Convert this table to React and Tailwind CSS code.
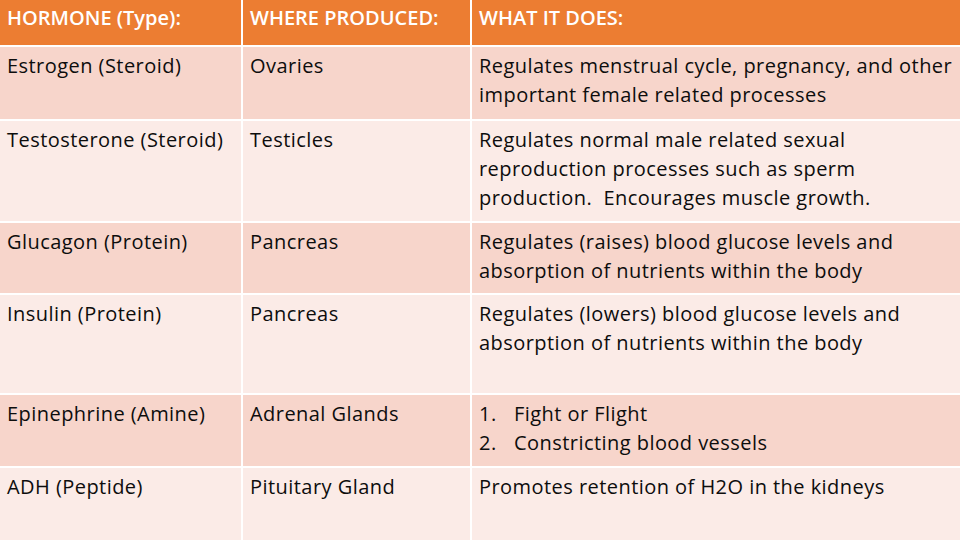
const rows = [
  {
    h: "h-[72px]",
    bg: "bg-[#f7d5cb]",
    name: "Estrogen (Steroid)",
    where: "Ovaries",
    does: ["Regulates menstrual cycle, pregnancy, and other", "important female related processes"],
  },
  {
    h: "h-[100px]",
    bg: "bg-[#fbebe7]",
    name: "Testosterone (Steroid)",
    where: "Testicles",
    does: [
      "Regulates normal male related sexual",
      "reproduction processes such as sperm",
      "production.  Encourages muscle growth.",
    ],
  },
  {
    h: "h-[70px]",
    bg: "bg-[#f7d5cb]",
    name: "Glucagon (Protein)",
    where: "Pancreas",
    does: ["Regulates (raises) blood glucose levels and", "absorption of nutrients within the body"],
  },
  {
    h: "h-[98px]",
    bg: "bg-[#fbebe7]",
    name: "Insulin (Protein)",
    where: "Pancreas",
    does: ["Regulates (lowers) blood glucose levels and", "absorption of nutrients within the body"],
  },
  {
    h: "h-[71px]",
    bg: "bg-[#f7d5cb]",
    name: "Epinephrine (Amine)",
    where: "Adrenal Glands",
    list: ["Fight or Flight", "Constricting blood vessels"],
  },
  {
    h: "h-[74px]",
    bg: "bg-[#fbebe7]",
    name: "ADH (Peptide)",
    where: "Pituitary Gland",
    does: ["Promotes retention of H2O in the kidneys"],
  },
];

function Cell({ children, className }) {
  return <div className={`px-[7px] whitespace-pre ${className}`}>{children}</div>;
}

function Head({ children }) {
  return (
    <Cell className="h-[45px] bg-[#ec7d32] text-white pt-[3px] font-semibold tracking-[0px]">
      {children}
    </Cell>
  );
}

export default function App() {
  return (
    <div
      className="w-[960px] h-[540px] overflow-hidden bg-white text-[20px] leading-[29px] tracking-[0.45px] text-[#0d0d0d]"
      style={{ fontFamily: "'Open Sans', sans-serif" }}
    >
      <div className="grid grid-cols-[241px_227px_488px] gap-x-[2px] gap-y-[2px]">
        <Head>HORMONE (Type):</Head>
        <Head>WHERE PRODUCED:</Head>
        <Head>WHAT IT DOES:</Head>
        {rows.map((r) => (
          <>
            <Cell key={r.name + "a"} className={`${r.h} ${r.bg} pt-[4px]`}>{r.name}</Cell>
            <Cell key={r.name + "b"} className={`${r.h} ${r.bg} pt-[4px]`}>{r.where}</Cell>
            <Cell key={r.name + "c"} className={`${r.h} ${r.bg} pt-[4px]`}>
              {r.list
                ? r.list.map((item, i) => (
                    <div key={item} className="flex">
                      <span className="w-[35px] shrink-0">{i + 1}.</span>
                      <span>{item}</span>
                    </div>
                  ))
                : r.does.map((line) => <div key={line}>{line}</div>)}
            </Cell>
          </>
        ))}
      </div>
    </div>
  );
}
